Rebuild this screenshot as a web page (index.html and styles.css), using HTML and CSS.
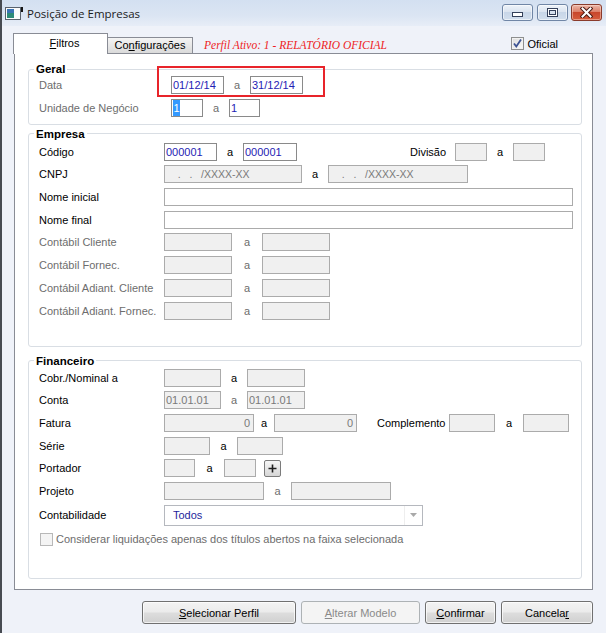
FILE: index.html
```html
<!DOCTYPE html>
<html lang="pt-BR">
<head>
<meta charset="utf-8">
<title>Posição de Empresas</title>
<link rel="stylesheet" href="styles.css">
</head>
<body>
<div class="window">
  <div class="titlebar">
    <svg class="app-icon" width="18" height="13" viewBox="0 0 18 13">
      <rect x="0.5" y="0.5" width="15" height="12" fill="#fbfbfb" stroke="#59626d"/>
      <rect x="2" y="2" width="7" height="9" fill="#2d8a78"/>
      <rect x="2" y="2" width="7" height="4" fill="#3a73b4"/>
      <rect x="16" y="0" width="2" height="5" fill="#151515"/>
    </svg>
    <span class="title">Posição de Empresas</span>
    <div class="caption">
      <span class="cbtn min">
        <svg width="11" height="5" viewBox="0 0 11 5"><rect x="0.5" y="0.5" width="10" height="4" fill="#fff" stroke="#34405a"/></svg>
      </span>
      <span class="cbtn max">
        <svg width="11" height="9" viewBox="0 0 11 9"><rect x="0.5" y="0.5" width="10" height="8" fill="#fff" stroke="#34405a"/><rect x="2.5" y="2.5" width="6" height="4" fill="#d6e0ed" stroke="#34405a"/></svg>
      </span>
      <span class="cbtn close">
        <svg width="13" height="11" viewBox="0 0 13 11"><path d="M2.5 1.5 L10.5 9.5 M10.5 1.5 L2.5 9.5" stroke="#4a1a12" stroke-width="4" stroke-linecap="square"/><path d="M2.5 1.5 L10.5 9.5 M10.5 1.5 L2.5 9.5" stroke="#fff" stroke-width="2" stroke-linecap="square"/></svg>
      </span>
    </div>
  </div>

  <div class="content">
    <div class="tabbar">
      <div class="tab active"><u>F</u>iltros</div>
      <div class="tab cfg">Co<u>n</u>figurações</div>
      <div class="profile">Perfil Ativo: 1 - RELATÓRIO OFICIAL</div>
      <div class="oficial">
        <span class="chk checked"><svg width="11" height="11" viewBox="0 0 11 11"><path d="M2 5.5 L4.3 8.5 L9 1.5" fill="none" stroke="#3d5393" stroke-width="1.8"/></svg></span>
        <span>Oficial</span>
      </div>
    </div>

    <div class="panel">
      <fieldset class="group geral">
        <legend>Geral</legend>
        <div class="rows rows-geral">
          <div class="row">
            <span class="lbl lbl-g dim">Data</span>
            <span class="hl">
              <span class="field white en w53">01/12/14</span>
              <span class="sep s26 dim">a</span>
              <span class="field white en w53">31/12/14</span>
            </span>
          </div>
          <div class="row">
            <span class="lbl lbl-g dim">Unidade de Negócio</span>
            <span class="field white en w32"><span class="sel">1</span></span>
            <span class="sep s26 dim">a</span>
            <span class="field white en w31">1</span>
          </div>
        </div>
      </fieldset>

      <fieldset class="group empresa">
        <legend>Empresa</legend>
        <div class="rows rows-empresa">
          <div class="row">
            <span class="lbl">Código</span>
            <span class="field white en w53">000001</span>
            <span class="sep s26">a</span>
            <span class="field white en w54">000001</span>
            <span class="lbl-inline divisao">Divisão</span>
            <span class="field w32"></span>
            <span class="sep s26">a</span>
            <span class="field w32"></span>
          </div>
          <div class="row">
            <span class="lbl">CNPJ</span>
            <span class="field w138 mask">   .   .   /XXXX-XX</span>
            <span class="sep s26">a</span>
            <span class="field w140 mask">   .   .   /XXXX-XX</span>
          </div>
          <div class="row">
            <span class="lbl">Nome inicial</span>
            <span class="field white w409"></span>
          </div>
          <div class="row">
            <span class="lbl">Nome final</span>
            <span class="field white w409"></span>
          </div>
          <div class="row">
            <span class="lbl dim">Contábil Cliente</span>
            <span class="field w68"></span>
            <span class="sep s30 dim">a</span>
            <span class="field w68"></span>
          </div>
          <div class="row">
            <span class="lbl dim">Contábil Fornec.</span>
            <span class="field w68"></span>
            <span class="sep s30 dim">a</span>
            <span class="field w68"></span>
          </div>
          <div class="row">
            <span class="lbl dim">Contábil Adiant. Cliente</span>
            <span class="field w68"></span>
            <span class="sep s30 dim">a</span>
            <span class="field w68"></span>
          </div>
          <div class="row">
            <span class="lbl dim">Contábil Adiant. Fornec.</span>
            <span class="field w68"></span>
            <span class="sep s30 dim">a</span>
            <span class="field w68"></span>
          </div>
        </div>
      </fieldset>

      <fieldset class="group financeiro">
        <legend>Financeiro</legend>
        <div class="rows rows-fin">
          <div class="row">
            <span class="lbl">Cobr./Nominal a</span>
            <span class="field w57"></span>
            <span class="sep s26">a</span>
            <span class="field w58"></span>
          </div>
          <div class="row">
            <span class="lbl">Conta</span>
            <span class="field w57 dimtext">01.01.01</span>
            <span class="sep s26 dim">a</span>
            <span class="field w58 dimtext">01.01.01</span>
          </div>
          <div class="row">
            <span class="lbl">Fatura</span>
            <span class="field w90 num">0</span>
            <span class="sep s20">a</span>
            <span class="field w83 num">0</span>
            <span class="lbl-inline complemento">Complemento</span>
            <span class="field w46"></span>
            <span class="sep s28">a</span>
            <span class="field w46"></span>
          </div>
          <div class="row">
            <span class="lbl">Série</span>
            <span class="field w46"></span>
            <span class="sep s27">a</span>
            <span class="field w46"></span>
          </div>
          <div class="row">
            <span class="lbl">Portador</span>
            <span class="field w31"></span>
            <span class="sep s29">a</span>
            <span class="field w32"></span>
            <span class="plus"><svg width="9" height="9" viewBox="0 0 9 9"><path d="M4.5 0.5 V8.5 M0.5 4.5 H8.5" stroke="#1e1e1e" stroke-width="1.6"/></svg></span>
          </div>
          <div class="row">
            <span class="lbl">Projeto</span>
            <span class="field w100"></span>
            <span class="sep s27 dim">a</span>
            <span class="field w100"></span>
          </div>
          <div class="row row-select">
            <span class="lbl">Contabilidade</span>
            <span class="select">
              <span class="select-text">Todos</span>
              <span class="select-arrow"><svg width="7" height="4" viewBox="0 0 7 4"><path d="M0 0 H7 L3.5 4 Z" fill="#a9a9a9"/></svg></span>
            </span>
          </div>
          <div class="row row-check">
            <span class="chk disabled"></span>
            <span class="dim">Considerar liquidações apenas dos títulos abertos na faixa selecionada</span>
          </div>
        </div>
      </fieldset>
    </div>

    <div class="buttons">
      <button class="btn b-sel"><u>S</u>elecionar Perfil</button>
      <button class="btn b-alt" disabled><u>A</u>lterar Modelo</button>
      <button class="btn b-conf"><u>C</u>onfirmar</button>
      <button class="btn b-canc">Cancela<u>r</u></button>
    </div>
  </div>
</div>
</body>
</html>
```

FILE: styles.css
```css
* { box-sizing: border-box; }
html, body { margin: 0; padding: 0; }
body {
  width: 606px;
  height: 633px;
  overflow: hidden;
  background: #eef1f8;
  font-family: "Liberation Sans", Arial, sans-serif;
  font-size: 11px;
  color: #000;
}
.window {
  width: 606px;
  height: 633px;
  border-left: 2px solid #474b52;
  background: #eff2f9;
  display: flex;
  flex-direction: column;
}

/* title bar */
.titlebar {
  height: 26px;
  flex: none;
  display: flex;
  align-items: center;
  padding-left: 3px;
  background: linear-gradient(#d3e0f1, #dbe5f3 60%, #e7edf7);
}
.app-icon { display: block; margin-top: 1px; }
.title {
  margin-left: 4px;
  font-family: "Open Sans", "Noto Sans", sans-serif;
  font-size: 11.5px;
  color: #1b1b1b;
}
.caption {
  margin-left: auto;
  margin-right: 4px;
  display: flex;
  gap: 4px;
  margin-top: -2px;
}
.cbtn {
  width: 31px;
  height: 17px;
  border: 1px solid #7086a6;
  border-radius: 3px;
  display: flex;
  align-items: center;
  justify-content: center;
  background: linear-gradient(#eef3f9, #dbe4f0 45%, #c8d6e8 50%, #d2deed);
  box-shadow: inset 0 0 0 1px rgba(255,255,255,0.55);
}
.cbtn.min { align-items: flex-end; padding-bottom: 3px; }
.cbtn.max + .cbtn.close { margin-left: -1px; }
.cbtn.close {
  border-color: #8a3b2c;
  background: linear-gradient(#ecb7a8, #dc8069 45%, #c8472c 50%, #d65d3d);
  box-shadow: inset 0 0 0 1px rgba(255,230,220,0.45);
}

/* content */
.content {
  margin-left: 12px;
  width: 579px;
  display: flex;
  flex-direction: column;
}
.tabbar {
  height: 21px;
  margin: 7px 0 -1px -1px;
  display: flex;
  align-items: flex-end;
  position: relative;
  z-index: 1;
}
.tab {
  text-align: center;
  border: 1px solid #898c95;
  color: #000;
}
.tab.active {
  width: 95px;
  height: 21px;
  border-bottom: 0;
  background: #fff;
  line-height: 19px;
  padding-left: 8px;
}
.tab.cfg {
  width: 85px;
  height: 17px;
  border-left: 0;
  line-height: 15px;
  background: linear-gradient(#f4f4f4, #e8e8e8 50%, #dadada);
}
.profile {
  align-self: center;
  margin-left: 11px;
  margin-top: 3px;
  font-family: "Liberation Serif", "Times New Roman", serif;
  font-style: italic;
  font-size: 11.5px;
  color: #ee1c24;
}
.oficial {
  align-self: center;
  margin-left: auto;
  margin-right: 35px;
  display: flex;
  align-items: center;
  gap: 3px;
}

/* checkboxes */
.chk {
  width: 13px;
  height: 13px;
  border: 1px solid #8e8f8f;
  background: linear-gradient(135deg, #dcdcdc, #fbfbfb);
  display: flex;
  align-items: center;
  justify-content: center;
  box-shadow: inset 0 0 0 1px #f2f2f2;
}
.chk.disabled {
  border-color: #b8b8b8;
  background: #f4f4f4;
  box-shadow: none;
}

/* panel */
.panel {
  height: 537px;
  border: 1px solid #898c95;
  background: #fff;
  padding: 8px 10px 0 13px;
}
.group {
  margin: 0;
  padding: 0;
  border: 1px solid #d9dee4;
  border-radius: 3px;
  min-width: 0;
}
.group legend {
  margin-left: 5px;
  padding: 0 2px;
  font-weight: bold;
  font-size: 11.5px;
  line-height: 14px;
}
.empresa { margin-top: 2px; }
.financeiro { margin-top: 7px; }

.rows {
  display: flex;
  flex-direction: column;
  gap: 4.7px;
  padding-left: 10px;
}
.rows-geral { padding-bottom: 7px; }
.rows-empresa { padding-top: 2px; padding-bottom: 26px; }
.rows-fin { padding-top: 1px; padding-bottom: 30px; }

.row {
  height: 18px;
  display: flex;
  align-items: center;
}
.row-select { height: 21px; }

.lbl { width: 125px; flex: none; }
.lbl-g { width: 132px; }
.dim { color: #6d6d6d; }

.sep { flex: none; text-align: center; }
.s20 { width: 20px; }
.s26 { width: 26px; }
.s27 { width: 27px; }
.s28 { width: 28px; }
.s29 { width: 29px; }
.s30 { width: 30px; }

.lbl-inline { flex: none; }
.divisao { margin-left: 113px; width: 45px; }
.complemento { margin-left: 20px; width: 72px; }

.field {
  flex: none;
  height: 18px;
  border: 1px solid #ababab;
  background: #f0f0f0;
  line-height: 16px;
  padding-left: 1px;
  white-space: pre;
  overflow: hidden;
}
.field.white { background: #fff; }
.field.en { border-color: #8a8a8a; color: #1f22b4; }
.field.mask { color: #7a7a7a; padding-left: 4px; font-size: 10.5px; }
.field.dimtext { color: #7a7a7a; }
.field.num { text-align: right; padding-right: 3px; color: #7a7a7a; }
.sel { display: inline-block; background: #3399ff; color: #fff; line-height: 16px; padding: 0 0.5px; }

.w31 { width: 31px; }
.w32 { width: 32px; }
.w46 { width: 46px; }
.w53 { width: 53px; }
.w54 { width: 54px; }
.w57 { width: 57px; }
.w58 { width: 58px; }
.w68 { width: 68px; }
.w83 { width: 83px; }
.w90 { width: 90px; }
.w100 { width: 100px; }
.w138 { width: 138px; }
.w140 { width: 140px; }
.w409 { width: 409px; }

/* red highlight around the date range */
.hl {
  position: relative;
  display: flex;
  align-items: center;
}
.hl::after {
  content: "";
  position: absolute;
  left: -14px;
  right: -22px;
  top: -10px;
  bottom: -3px;
  border: 2px solid #e8242a;
}

.plus {
  margin-left: 8px;
  width: 17px;
  height: 17px;
  border: 1px solid #7b7b7b;
  border-radius: 2px;
  background: linear-gradient(#f6f6f6, #e6e6e6 50%, #d6d6d6);
  display: flex;
  align-items: center;
  justify-content: center;
}

.select {
  width: 259px;
  height: 21px;
  border: 1px solid #b5b8be;
  background: #fff;
  display: flex;
  align-items: center;
}
.select-text { padding-left: 8px; color: #1f1f9c; flex: 1; }
.select-arrow {
  width: 18px;
  height: 100%;
  border-left: 1px solid #eeeeee;
  display: flex;
  align-items: center;
  justify-content: center;
}

.row-check { gap: 3px; padding-left: 1px; }

/* bottom buttons */
.buttons {
  margin-top: 11px;
  display: flex;
  justify-content: flex-end;
  gap: 5px;
}
.btn {
  height: 23px;
  padding: 0;
  border: 1px solid #707070;
  border-radius: 3px;
  background: linear-gradient(#f3f3f3, #ebebeb 48%, #dddddd 52%, #d0d0d0);
  box-shadow: inset 0 0 0 1px rgba(255,255,255,0.7);
  font-family: "Liberation Sans", Arial, sans-serif;
  font-size: 11px;
  color: #000;
}
.btn:disabled {
  border-color: #adb2b5;
  background: #f4f4f4;
  color: #8a8a8a;
  box-shadow: none;
}
.b-sel { width: 154px; }
.b-alt { width: 119px; }
.b-conf { width: 71px; }
.b-canc { width: 92px; }
```
